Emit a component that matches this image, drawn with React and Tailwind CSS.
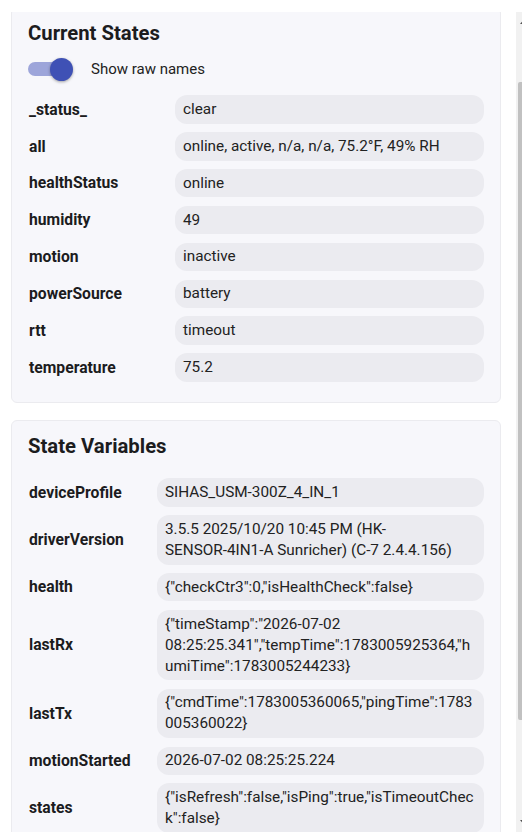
import React from 'react';

const currentStates = [
    ['_status_', 'clear'],
    ['all', 'online, active, n/a, n/a, 75.2°F, 49% RH'],
    ['healthStatus', 'online'],
    ['humidity', '49'],
    ['motion', 'inactive'],
    ['powerSource', 'battery'],
    ['rtt', 'timeout'],
    ['temperature', '75.2'],
];

const stateVariables = [
    ['deviceProfile', 'SIHAS_USM-300Z_4_IN_1'],
    ['driverVersion', <>3.5.5 2025/10/20 10:45 PM (HK-<span className="whitespace-nowrap">SENSOR-4IN1-A</span> Sunricher) (C-7 2.4.4.156)</>],
    ['health', '{"checkCtr3":0,"isHealthCheck":false}'],
    ['lastRx', '{"timeStamp":"2026-07-02 08:25:25.341","tempTime":1783005925364,"humiTime":1783005244233}'],
    ['lastTx', '{"cmdTime":1783005360065,"pingTime":1783005360022}'],
    ['motionStarted', '2026-07-02 08:25:25.224'],
    ['states', '{"isRefresh":false,"isPing":true,"isTimeoutCheck":false}'],
];

const StateRow = ({ name, value, labelWidth }) => (
    <div className="flex items-center py-[4.2px]">
        <div className={`${labelWidth} shrink-0 pl-px text-[15.7px] font-bold text-[#1c1c1e]`}>{name}</div>
        <div className="flex-1 min-w-0 rounded-[12px] bg-[#ebebf0] px-2 py-[3.75px] text-[15.3px] leading-[21px] text-[#222] break-words">
            {value}
        </div>
    </div>
);

const RawSwitch = () => (
    <div className="relative h-[24px] w-[46px] shrink-0">
        <div className="absolute left-0 top-[5px] h-[14px] w-[40px] rounded-full bg-[#9da5da]"></div>
        <div className="absolute right-[1px] top-[1px] h-[23px] w-[23px] rounded-full bg-[#3f51b5] shadow-[0_1px_3px_rgba(0,0,0,0.35)]"></div>
    </div>
);

const Card = ({ title, children, className }) => (
    <div className={`rounded-[6px] border border-[#ebebef] bg-[#f7f7fb] px-4 pt-[11px] ${className}`}>
        <h2 className="text-[20.3px] leading-[28px] font-bold text-[#1c1c1e]">{title}</h2>
        {children}
    </div>
);

const ScrollTrack = () => (
    <div className="relative h-full w-[15px] shrink-0 bg-[#f1f1f1]">
        <svg className="absolute left-0 top-[5px]" width="15" height="10" viewBox="0 0 15 10">
            <path d="M4 7 L7.5 3 L11 7 Z" fill="#505050" />
        </svg>
        <div className="absolute left-[2px] top-[70px] h-[638px] w-[11px] rounded-[2px] bg-[#c1c1c1]"></div>
        <svg className="absolute bottom-[5px] left-0" width="15" height="10" viewBox="0 0 15 10">
            <path d="M4 3 L7.5 7 L11 3 Z" fill="#505050" />
        </svg>
    </div>
);

export default function App() {
    return (
        <div className="h-[839px] w-[522px] overflow-hidden bg-white font-['Roboto',sans-serif] text-[#1c1c1e]">
            <div className="flex h-[820px] pt-[12px] pl-[11px] box-content">
                <div className="h-[820px] w-[490px] shrink-0 overflow-hidden">
                    <div className="-mt-[5px] flex flex-col gap-[17px]">
                        <Card title="Current States" className="pb-[16px]">
                            <div className="mt-[10px] mb-[10px] flex h-[24px] items-center gap-[17px]">
                                <RawSwitch />
                                <span className="text-[15px] text-[#222]">Show raw names</span>
                            </div>
                            <div>
                                {currentStates.map(([name, value]) => (
                                    <StateRow key={name} name={name} value={value} labelWidth="w-[147px]" />
                                ))}
                            </div>
                        </Card>
                        <Card title="State Variables" className="pb-[18px]">
                            <div className="mt-[14px]">
                                {stateVariables.map(([name, value]) => (
                                    <StateRow key={name} name={name} value={value} labelWidth="w-[129px]" />
                                ))}
                            </div>
                        </Card>
                    </div>
                </div>
                <div className="ml-[15px] h-[820px]">
                    <ScrollTrack />
                </div>
            </div>
        </div>
    );
}
